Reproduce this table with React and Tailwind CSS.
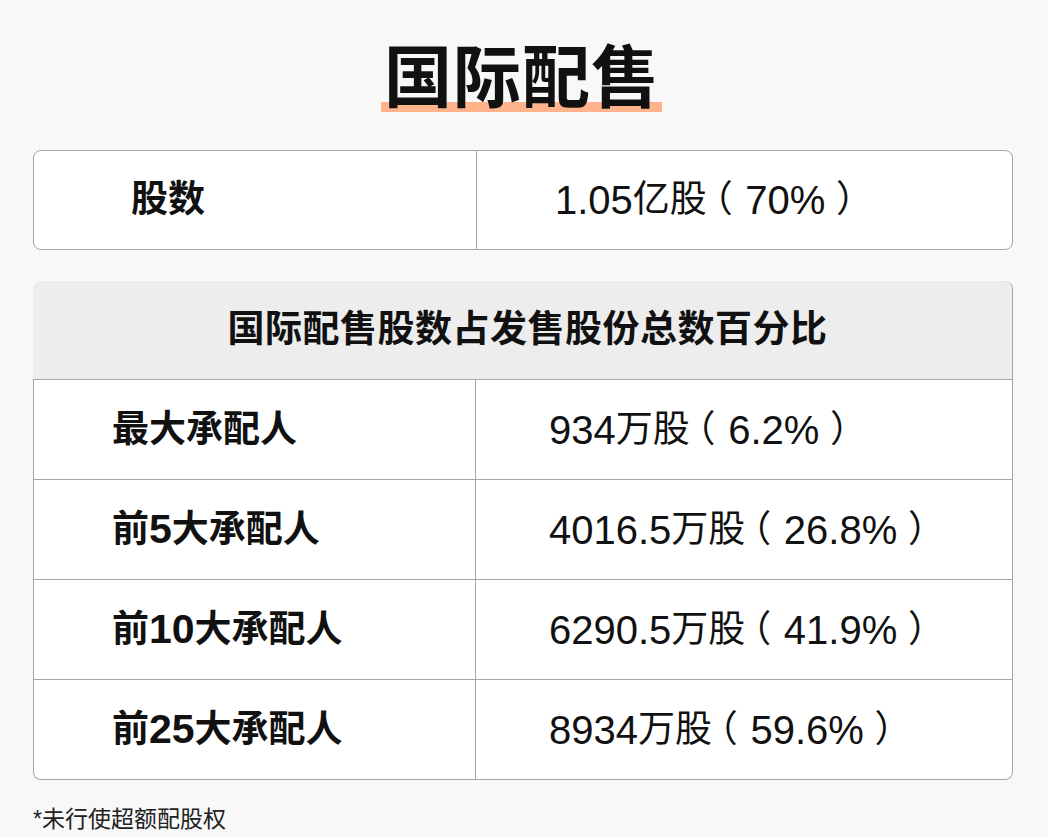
import React from "react";

const FONT = { fontFamily: '"Liberation Sans", "Noto Sans CJK SC", sans-serif' };

function Mixed({ text, numClass }) {
  const parts = text.split(/([0-9.%]+|[（）])/).filter((p) => p.length > 0);
  return (
    <>
      {parts.map((p, i) => {
        if (/^[0-9.%]+$/.test(p))
          return (
            <span key={i} className={numClass}>
              {p}
            </span>
          );
        if (p === "（")
          return (
            <span key={i} className="inline-block [font-feature-settings:'palt'] ml-[6px] mr-[14px]">
              {p}
            </span>
          );
        if (p === "）")
          return (
            <span key={i} className="inline-block [font-feature-settings:'palt'] ml-[12px]">
              {p}
            </span>
          );
        return <span key={i}>{p}</span>;
      })}
    </>
  );
}

const rows = [
  ["最大承配人", "934万股（6.2%）"],
  ["前5大承配人", "4016.5万股（26.8%）"],
  ["前10大承配人", "6290.5万股（41.9%）"],
  ["前25大承配人", "8934万股（59.6%）"],
];

export default function App() {
  return (
    <div
      className="w-[1048px] h-[837px] bg-[#f8f8f8] text-[#111] overflow-hidden"
      style={FONT}
    >
      <div className="flex justify-center pt-[44px]">
        <div className="relative">
          <div className="absolute left-[-3px] right-[2px] bottom-0 h-[10px] bg-[#ffb38a]" />
          <div className="relative text-[68px] leading-[68px] font-bold tracking-[1px] pr-[4px]">
            国际配售
          </div>
        </div>
      </div>

      <div className="ml-[33px] w-[980px] mt-[38px] h-[100px] flex bg-white border border-[#a6a6a6] rounded-[8px]">
        <div className="w-[443px] border-r border-[#a6a6a6] flex items-center pl-[97px] text-[37px] font-bold">
          股数
        </div>
        <div className="flex-1 flex items-center pl-[78px] text-[37px]">
          <Mixed text="1.05亿股（70%）" numClass="text-[40px]" />
        </div>
      </div>

      <div className="ml-[33px] w-[980px] mt-[31px]">
        <div className="h-[99px] bg-[#ededed] rounded-t-[8px] border-b border-r border-[#a6a6a6] flex items-center justify-center pl-[10px] text-[37px] font-bold tracking-[0.5px]">
          国际配售股数占发售股份总数百分比
        </div>
        <div className="bg-white border-x border-b border-[#a6a6a6] rounded-b-[8px]">
          {rows.map(([label, value], i) => (
            <div
              key={i}
              className={
                "flex " +
                (i < rows.length - 1 ? "h-[100px] border-b border-[#a6a6a6]" : "h-[99px]")
              }
            >
              <div className="w-[442px] border-r border-[#a6a6a6] flex items-center pl-[78px] text-[37px] font-bold">
                <Mixed text={label} numClass="text-[41px]" />
              </div>
              <div className="flex-1 flex items-center pl-[73px] text-[37px]">
                <Mixed text={value} numClass="text-[40px]" />
              </div>
            </div>
          ))}
        </div>
      </div>

      <div className="ml-[33px] mt-[24px] text-[23px] leading-[30px] text-[#222]">
        *未行使超额配股权
      </div>
    </div>
  );
}
